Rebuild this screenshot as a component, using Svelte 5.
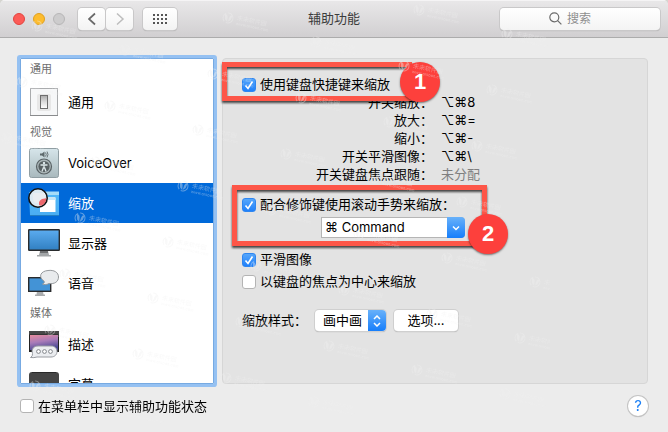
<script>
  let shortcutsOn = $state(true);
  let gestureOn = $state(true);
  let smoothOn = $state(true);
  let followOn = $state(false);
  let menuBarOn = $state(false);
  let selected = $state('zoom');

  const groups = [
    { title: '通用', items: [{ id: 'general', label: '通用' }] },
    {
      title: '视觉',
      items: [
        { id: 'voiceover', label: 'VoiceOver' },
        { id: 'zoom', label: '缩放' },
        { id: 'display', label: '显示器' },
        { id: 'speech', label: '语音' }
      ]
    },
    {
      title: '媒体',
      items: [
        { id: 'descriptions', label: '描述' },
        { id: 'captions', label: '字幕' }
      ]
    }
  ];

  const shortcuts = [
    ['开关缩放：', '⌥⌘', '8'],
    ['放大：', '⌥⌘', '='],
    ['缩小：', '⌥⌘', '-'],
    ['开关平滑图像：', '⌥⌘', '\\'],
    ['开关键盘焦点跟随：', '', '未分配']
  ];

  // Watermarks repeat on a slanted lattice.
  const marks = [];
  for (let i = -5; i <= 6; i++) {
    for (let j = -5; j <= 8; j++) {
      const x = 301 + i * 88 - j * 15;
      const y = 98 + i * 24 + j * 56;
      if (x > 6 && x < 550 && y > -6 && y < 420) marks.push({ x, y });
    }
  }
</script>

<div class="window">
  <header>
    <div class="left">
      <div class="lights">
        <button class="light red" aria-label="关闭"></button>
        <button class="light yellow" aria-label="最小化"></button>
        <button class="light grey" aria-label="缩放窗口" disabled></button>
      </div>
      <div class="nav">
        <button class="tool" aria-label="后退">
          <svg width="10" height="14" viewBox="0 0 10 14"><path d="M8 1.500 2 7l6 5.500" fill="none" stroke="#6a6a6a" stroke-width="1.700" /></svg>
        </button>
        <button class="tool" aria-label="前进">
          <svg width="10" height="14" viewBox="0 0 10 14"><path d="m2 1.500 6 5.500-6 5.500" fill="none" stroke="#bdbdbd" stroke-width="1.500" /></svg>
        </button>
      </div>
      <button class="tool grid" aria-label="显示全部">
        <svg width="14" height="10" viewBox="0 0 14 10" fill="#555">
          {#each [0, 4, 8, 12] as x}
            {#each [0, 4, 8] as y}<rect {x} {y} width="2" height="2" />{/each}
          {/each}
        </svg>
      </button>
    </div>
    <h1>辅助功能</h1>
    <label class="search">
      <svg width="13" height="13" viewBox="0 0 13 13" fill="none" stroke="#6c6c6c" stroke-width="1.200"><circle cx="5.300" cy="5.300" r="4.500" /><path d="m8.600 8.600 3.800 3.800" /></svg>
      <input type="text" placeholder="搜索" aria-label="搜索" />
    </label>
  </header>

  <main>
    <nav class="sidebar">
      {#each groups as group}
        <h2>{group.title}</h2>
        {#each group.items as item}
          <button class="item" class:active={selected === item.id} onclick={() => (selected = item.id)}>
            <svg width="32" height="32" viewBox="0 0 32 32">
              {#if item.id === 'general'}
                <defs><linearGradient id="sw" x2="0" y2="1"><stop stop-color="#aaa" /><stop offset=".5" stop-color="#ddd" /><stop offset="1" stop-color="#fff" /></linearGradient></defs>
                <rect x="2.500" y="2.500" width="27" height="27" fill="#f6f7f8" stroke="#a9abad" />
                <path d="M2 29.500h28" stroke="#898b8d" />
                <rect x="9" y="8" width="14" height="17" rx="2" fill="#e7e7e7" />
                <rect x="12.500" y="9.500" width="7" height="13" fill="url(#sw)" stroke="#6d6d6d" />
              {:else if item.id === 'voiceover'}
                <defs><linearGradient id="vo" x2="0" y2="1"><stop stop-color="#d6e5ea" /><stop offset="1" stop-color="#a9b9bd" /></linearGradient></defs>
                <rect x="1.500" y="1.500" width="29" height="29" rx="2" fill="url(#vo)" stroke="#909ea3" />
                <path d="M12 6.500h2L16.500 4.500v6L14 8.500h-2z" fill="#5d686b" />
                <path d="M17.500 5.500q1.500 2 0 4M19 4.500q2 3 0 6" stroke="#667174" fill="none" />
                <circle cx="16" cy="19.500" r="7.500" fill="#a9b5b7" stroke="#596265" stroke-width="1.200" />
                <circle cx="16" cy="19.500" r="5.600" fill="#586163" />
                <circle cx="16" cy="16" r="1.200" fill="#dce7e9" />
                <path d="M12.500 18h7M16 18v3m-2 3.500 1.300-3.500h1.400l1.300 3.500" stroke="#dce7e9" stroke-width="1.300" fill="none" />
              {:else if item.id === 'zoom'}
                <defs><linearGradient id="zm" x2="0" y2="1"><stop stop-color="#51b9fa" /><stop offset="1" stop-color="#4aaef2" /></linearGradient></defs>
                <path d="M1 5h30v23H2z" fill="url(#zm)" />
                <path d="M2 4.500h29v3.500H2z" fill="#a4dcf8" />
                <path d="M2 28.500h29" stroke="#247ec1" />
                <path d="M12 11h15.500v14H12z" fill="#fff" /><path d="M17 10h10.500v3H17z" fill="#c8e6f5" />
                <circle cx="10" cy="11" r="9.200" fill="#dceaf2" stroke="#111" stroke-width="1.600" />
                <path d="M5 6h12v10H7q-3-3-2-10" fill="#e9edf1" />
                <path d="M11 18q-1-6 6-6.500l1.500-.5q-.5 6-5.500 7.700z" fill="#ed686c" />
              {:else if item.id === 'display'}
                <defs><linearGradient id="dp" x2="0" y2="1"><stop stop-color="#5cacf0" /><stop offset="1" stop-color="#307fc1" /></linearGradient></defs>
                <path d="M12 24h8l1 4h2v1.500H9V28h2z" fill="#a3a6a8" /><path d="M12 24h8v2h-8z" fill="#6e7072" />
                <rect x=".7" y="2.700" width="30.600" height="20.600" rx=".5" fill="url(#dp)" stroke="#292b2d" stroke-width="1.400" />
              {:else if item.id === 'speech'}
                <path d="M9 24h6l.5 3.500H17v1.500H7v-1.500h1.500z" fill="#a9acae" />
                <rect x=".7" y="10.700" width="22" height="13.600" fill="#4393d6" stroke="#292b2d" stroke-width="1.400" />
                <path d="M20 3.500c6-.8 10.500 1.800 10.500 6.500s-4 7.300-9.500 6.500c-2.500 1.400-4.800 1.300-6.500.5 1.500-.3 2-1.500 1.700-2.700C9.500 9.500 13 4 20 3.500z" fill="#e9ebed" stroke="#96999c" />
              {:else if item.id === 'descriptions'}
                <defs><linearGradient id="ds" x2=".3" y2="1"><stop stop-color="#e78b9d" /><stop offset=".5" stop-color="#a97bb9" /><stop offset="1" stop-color="#4d4b96" /></linearGradient></defs>
                <rect x="1" y="3" width="30" height="21" fill="#222" />
                <rect x="1" y="3" width="30" height="3.500" fill="#474747" />
                <rect x="2" y="7" width="28" height="15" fill="url(#ds)" />
                <path d="M10 18h13c8 0 8 11 0 11H9q-3 1-6.500.5Q5 28 4.500 25.500C3 21 6 18 10 18z" fill="#ebedf0" stroke="#999ca2" />
                <g fill="#fff" stroke="#777a80" stroke-width=".9"><circle cx="10.500" cy="23.500" r="1.900" /><circle cx="16.500" cy="23.500" r="1.900" /><circle cx="22.500" cy="23.500" r="1.900" /></g>
              {:else}
                <rect x="1" y="4" width="30" height="24" rx="3" fill="#454545" />
                <path d="M4 4.500h24" stroke="#292929" />
              {/if}
            </svg>
            <span>{item.label}</span>
          </button>
        {/each}
      {/each}
    </nav>

    <section class="panel">
      <label class="check"><input type="checkbox" bind:checked={shortcutsOn} />使用键盘快捷键来缩放</label>
      <dl>
        {#each shortcuts as [name, keys, last]}
          <dt>{name}</dt>
          <dd class:unset={!keys}><span class="keys">{keys}</span>{last}</dd>
        {/each}
      </dl>
      <label class="check gesture"><input type="checkbox" bind:checked={gestureOn} />配合修饰键使用滚动手势来缩放：</label>
      <div class="combo">
        <select aria-label="修饰键">
          <option>⌘ Command</option>
          <option>⌥ Option</option>
          <option>⌃ Control</option>
        </select>
        <span class="cap"><svg width="8" height="6" viewBox="0 0 8 6"><path d="m1 1.500 3 3 3-3" /></svg></span>
      </div>
      <label class="check smooth"><input type="checkbox" bind:checked={smoothOn} />平滑图像</label>
      <label class="check follow"><input type="checkbox" bind:checked={followOn} />以键盘的焦点为中心来缩放</label>
      <div class="style-row">
        <label for="zoom-style">缩放样式：</label>
        <div class="popup">
          <select id="zoom-style">
            <option>画中画</option>
            <option>全屏幕</option>
          </select>
          <span class="cap"><svg width="8" height="12" viewBox="0 0 8 12"><path d="m1 4 3-3 3 3M1 8l3 3 3-3" /></svg></span>
        </div>
        <button class="push">选项...</button>
      </div>

      <div class="callout first"></div>
      <div class="callout second"></div>
      <span class="badge one">1</span>
      <span class="badge two">2</span>
    </section>
  </main>

  <footer>
    <label class="check"><input type="checkbox" bind:checked={menuBarOn} />在菜单栏中显示辅助功能状态</label>
    <button class="help" aria-label="帮助">?</button>
  </footer>

  <div class="marks" aria-hidden="true">
    {#each marks as m}
      <div class="mark" style="left: {m.x}px; top: {m.y}px">
        <svg width="12" height="12" viewBox="0 0 12 12"><circle cx="6" cy="6" r="5" fill="none" stroke="currentColor" stroke-width="1" stroke-dasharray="9 2" /><path d="M2 2.500q3 0 3.500 3L6 10 3.500 8zM10 2.500q-2.500 0-3 3L6.500 10 9 7.500z" fill="currentColor" /></svg>
        <div><b>未来软件园</b><i>www.orsoon.com</i></div>
      </div>
    {/each}
  </div>
</div>

<style>
  :global(body) {
    margin: 0;
    background: #d5d5d0;
  }
  .window {
    position: relative;
    display: flex;
    flex-direction: column;
    height: 100vh;
    overflow: hidden;
    border-radius: 5px 5px 0 0;
    background: #ececec;
    color: #000;
    font: 13px/17px Inter, 'Noto Sans CJK SC', sans-serif;
  }
  button,
  input,
  select {
    box-sizing: border-box;
    margin: 0;
    padding: 0;
    border: 0;
    font: inherit;
    color: inherit;
  }
  header {
    display: grid;
    grid-template-columns: 1fr auto 1fr;
    align-items: center;
    flex: none;
    box-sizing: border-box;
    height: 38px;
    padding: 0 8px;
    border-bottom: 1px solid #acacac;
    background: linear-gradient(#e9e8e9, #d1cfd1);
    box-shadow: inset 0 1px #f5f4f5;
  }
  h1 {
    margin: 0;
    font: inherit;
    color: #3c3c3c;
  }
  .left,
  .lights,
  .nav {
    display: flex;
    align-items: center;
  }
  .left {
    padding-left: 5px;
  }
  .lights {
    gap: 8px;
    margin-right: 13px;
  }
  .light {
    width: 12px;
    height: 12px;
    border-radius: 50%;
  }
  .red {
    background: #fc5b57;
    border: 1px solid #e2443f;
  }
  .yellow {
    background: #fdbc2e;
    border: 1px solid #e0a01f;
  }
  .grey {
    background: #cdcccd;
    border: 1px solid #b7b6b7;
  }
  .nav {
    gap: 1px;
    margin-right: 10px;
  }
  .tool {
    display: flex;
    align-items: center;
    justify-content: center;
    width: 27px;
    height: 22px;
    border-radius: 4px;
    background: linear-gradient(#fff, #f3f3f3);
    box-shadow: 0 0 0 1px #c9c8c9, 0 1px 1px #9d9c9d;
  }
  .grid {
    width: 34px;
  }
  .search {
    display: flex;
    align-items: center;
    justify-content: center;
    justify-self: end;
    gap: 5px;
    box-sizing: border-box;
    width: 160px;
    height: 22px;
    border-radius: 4px;
    background: linear-gradient(#fff, #f4f4f4);
    box-shadow: 0 0 0 1px #c9c8c9, 0 1px 1px #9d9c9d;
  }
  .search input {
    width: 44px;
    background: none;
    font-size: 12px;
    outline: none;
  }
  .search input::placeholder {
    color: #8f8f8f;
    opacity: 1;
  }
  main {
    display: flex;
    flex: 1;
    gap: 8px;
    min-height: 0;
    padding: 20px 20px 0;
  }
  .sidebar {
    flex: none;
    box-sizing: border-box;
    width: 194px;
    overflow: hidden auto;
    scrollbar-width: none;
    border: 1px solid #77aae2;
    border-radius: 1px;
    background: #fff;
    box-shadow: 0 0 0 3px #95c1f2;
  }
  .sidebar h2 {
    margin: 0;
    padding-left: 9px;
    font-size: 11px;
    font-weight: 400;
    line-height: 21px;
    color: #6e6e6e;
  }
  .sidebar h2:first-child {
    padding-bottom: 2px;
  }
  .item {
    display: flex;
    align-items: center;
    gap: 8px;
    width: 100%;
    height: 40px;
    padding-left: 7px;
    background: none;
    text-align: left;
  }
  .active {
    background: #0069d9;
    color: #fff;
  }
  .panel {
    position: relative;
    flex: 1;
    min-width: 0;
    padding: 17px 0 0 19px;
    border: 1px solid #d6d6d6;
    border-radius: 4px;
    background: #e3e3e3;
  }
  .check {
    display: flex;
    align-items: center;
    gap: 4px;
    height: 17px;
    white-space: nowrap;
  }
  .check input {
    appearance: none;
    width: 14px;
    height: 14px;
    border: 1px solid #b4b4b4;
    border-radius: 3px;
    background: #fff;
  }
  .check input:checked {
    border-color: #2f86f0;
    background:
      url("data:image/svg+xml,%3Csvg xmlns='http://www.w3.org/2000/svg' viewBox='0 0 12 12'%3E%3Cpath d='m2.500 6.500 2.500 3L9.500 2.500' fill='none' stroke='%23fff' stroke-width='1.600'/%3E%3C/svg%3E"),
      linear-gradient(#57a7fb, #1f80fa);
  }
  dl {
    display: grid;
    grid-template-columns: 191px 1fr;
    column-gap: 8px;
    margin: 0;
    line-height: 18px;
  }
  dt {
    text-align: right;
  }
  dd {
    display: flex;
    align-items: center;
    height: 18px;
    margin: 0;
  }
  .unset {
    color: #7f7f7f;
  }
  .gesture {
    margin-top: 13px;
  }
  .combo,
  .popup {
    position: relative;
    height: 21px;
    background: #fff;
  }
  .combo {
    width: 144px;
    margin: 4px 0 13px 79px;
    border-radius: 0 4px 4px 0;
    box-shadow: inset 0 0 0 1px #b5b5b5;
  }
  select {
    display: block;
    width: 100%;
    height: 21px;
    appearance: none;
    background: none;
  }
  .combo select {
    padding-left: 4px;
  }
  .cap {
    position: absolute;
    top: 0;
    right: 0;
    display: flex;
    align-items: center;
    justify-content: center;
    width: 18px;
    height: 21px;
    border-radius: 0 4px 4px 0;
    background: linear-gradient(#68b1fa, #167efb);
    pointer-events: none;
  }
  .cap path {
    fill: none;
    stroke: #fff;
    stroke-width: 1.5;
  }
  .follow {
    margin-top: 5px;
  }
  .style-row {
    display: flex;
    align-items: center;
    gap: 8px;
    margin-top: 20px;
  }
  .style-row label {
    width: 65px;
    white-space: nowrap;
  }
  .popup,
  .push {
    border-radius: 4px;
    box-shadow: 0 0 0 1px #cfcfcf, 0 1px 1px #9f9f9f;
  }
  .popup {
    width: 71px;
  }
  .popup select {
    padding-left: 8px;
  }
  .push {
    width: 64px;
    height: 21px;
    background: #fff;
  }
  .callout {
    position: absolute;
    box-sizing: border-box;
    border: 5px solid #fd5648;
    filter: drop-shadow(0 2px 1px rgba(0, 0, 0, 0.7));
    pointer-events: none;
  }
  .first {
    top: 3px;
    left: -1px;
    width: 190px;
    height: 39px;
  }
  .second {
    top: 126px;
    left: 9px;
    width: 255px;
    height: 61px;
  }
  .badge {
    position: absolute;
    width: 40px;
    height: 40px;
    border-radius: 50%;
    background: #fd403c;
    box-shadow: 0 1px 2px rgba(0, 0, 0, 0.5);
    color: #fff;
    font: bold 22px/40px 'Liberation Sans', sans-serif;
    text-align: center;
  }
  .one {
    top: 3px;
    left: 177px;
  }
  .two {
    top: 155px;
    left: 245px;
  }
  footer {
    display: flex;
    align-items: center;
    justify-content: space-between;
    flex: none;
    box-sizing: border-box;
    height: 48px;
    padding: 0 20px 4px;
  }
  .help {
    width: 20px;
    height: 20px;
    border-radius: 50%;
    background: #fff;
    box-shadow: 0 0 0 1px #c4c4c4, 0 1px 1px #999;
    color: #1d80f5;
    font-size: 15px;
    line-height: 20px;
  }
  .marks {
    position: absolute;
    inset: 0 118px 0 0;
    overflow: hidden;
    pointer-events: none;
  }
  .mark {
    position: absolute;
    display: flex;
    gap: 3px;
    margin: -6px 0 0 -6px;
    color: #f0f0f0;
    opacity: 0.4;
    transform: rotate(12deg);
    transform-origin: 6px 6px;
    white-space: nowrap;
  }
  .mark b,
  .mark i {
    display: block;
    font-style: normal;
    font-weight: 400;
  }
  .mark b {
    font-size: 6px;
    line-height: 8px;
  }
  .mark i {
    font-size: 4px;
    line-height: 4px;
  }
</style>
